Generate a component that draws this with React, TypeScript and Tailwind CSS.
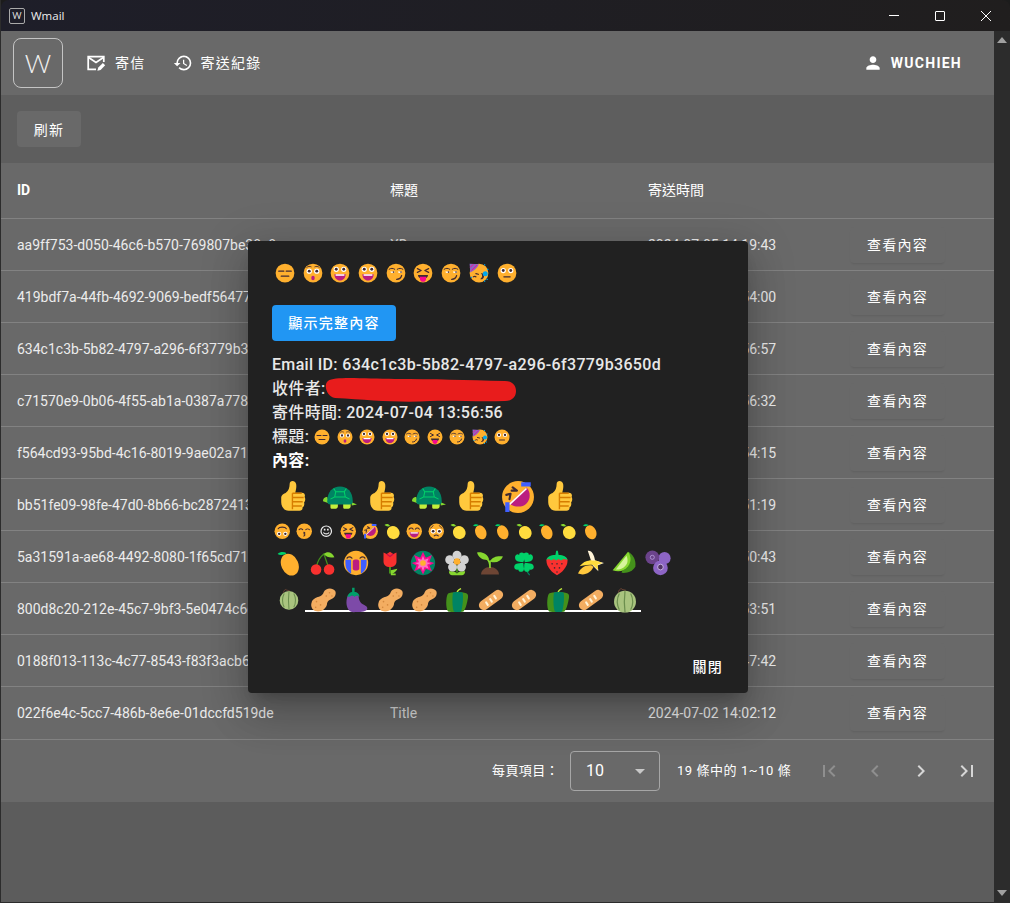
import React from 'react';
import { MdArrowDropDown, MdChevronLeft, MdChevronRight, MdFirstPage, MdHistory, MdLastPage, MdPerson } from 'react-icons/md';

const ink = '#402A32';

const Eye = ({ x, y = 13, r = 4.2 }: { x: number; y?: number; r?: number }) => (
  <>
    <circle cx={x} cy={y} r={r} fill="#fff" />
    <circle cx={x} cy={y} r={r * 0.55} fill={ink} />
  </>
);

const Line = ({ d, w = 2 }: { d: string; w?: number }) => (
  <path d={d} fill="none" stroke={ink} strokeWidth={w} strokeLinecap="round" strokeLinejoin="round" />
);

const Head = () => <circle cx="16" cy="16" r="15" fill="#FFB02E" />;

const Mouth = () => (
  <>
    <path d="M7 18h18c0 6-4 10-9 10s-9-4-9-10z" fill="#BB1D80" />
    <path d="M9 18h14v2.5H9z" fill="#fff" />
  </>
);

const Smirk = () => (
  <>
    <Head />
    <Line d="M5 10c3-2 6-2 9 0M18 10c3-2 6-2 9 0" w={1.600} />
    <path d="M7 13.500h7a3.500 2.500 0 0 1-7 0zM19 13.500h7a3.500 2.500 0 0 1-7 0z" fill="#fff" />
    <circle cx="12" cy="14.500" r="1.300" fill={ink} />
    <circle cx="24" cy="14.500" r="1.300" fill={ink} />
    <Line d="M17 26c4 0 7-2 8-6" />
  </>
);

const Thumb = () => (
  <g transform="translate(-0.5 0) scale(0.88 1)">
    <path d="M4 17c0-3 3-4 5-5 3-2 4-5 4-8 0-4 6-4 7 0 .6 3-.5 6-1 8h7c3 0 4 2 3 4 1 1 1 4-.5 5 .5 2 0 4-1.500 4.500 0 2-1 3.500-3.500 3.500H12c-5 0-8-4-8-8z" fill="#FFC83D" />
    <path d="M16 12.500h10M16 16.500h12M16 20.500h11M16 24.500h10M16 12.500v15" fill="none" stroke="#D67D00" strokeWidth="1.500" />
  </g>
);

const Turtle = () => (
  <>
    <path d="M0 20c0-3 2-4 4-4l2 6zM27 21l5 2-5 1z" fill="#86D72F" />
    <path d="M7 22h7v3c0 1-1 2-2 2H8c-1 0-1-1-1-2zM19 22h7v3c0 1-1 2-2 2h-4c-1 0-1-1-1-2z" fill="#C3EF3C" />
    <path d="M4 20C4 11 9 6 16 6s12 5 12 14c0 2-1 3-3 3H7c-2 0-3-1-3-3z" fill="#008463" />
    <path d="M7 18l4-2 1-5 8 0 1 5 4 2M11 16h10M12 11l-2-3M20 11l2-3" fill="none" stroke="#00D26A" strokeWidth="1" />
  </>
);

const Mango = () => (
  <>
    <ellipse cx="17" cy="18" rx="10.500" ry="14" fill="#FFB02E" transform="rotate(-24 17 18)" />
    <path d="M2 5c3-3 8-3 11-1-2 2-8 3-11 1z" fill="#00D26A" />
  </>
);

const Lemon = () => (
  <>
    <ellipse cx="18" cy="18.500" rx="12" ry="13" fill="#FFDC3E" transform="rotate(-30 18 18.500)" />
    <path d="M1 4c3-3 8-3 11 2-4 1-8 1-11-2z" fill="#86D72F" />
  </>
);

const Rofl = () => (
  <>
    <Head />
    <path d="M8 22L24 7c4 4 4 11 0 15-4 4-11 4-16 0z" fill="#BB1D80" />
    <path d="M8 23L24 8" stroke="#fff" strokeWidth="1.500" />
    <Line d="M11 7l4 3-5 0M5 14l4-1-1 5" />
    <path d="M19 2h9v4h-9zM4 21h4v9H4z" fill="#3F5FFF" />
  </>
);

const Melon = () => (
  <>
    <path d="M8 7C8 4 10 2 12 2M12 3l5 1" fill="none" stroke="#6D4534" strokeWidth="1.200" />
    <circle cx="16" cy="18" r="13.500" fill="#A9C47F" />
    <path d="M9 8c-3 6-3 14 0 20M16 5c-1 8-1 18 0 26M23 8c3 6 3 14 0 20" fill="none" stroke="#6B8E4E" strokeWidth="1.500" />
  </>
);

const Peanut = () => (
  <>
    <path d="M31 5c2 4-1 9-5 10-3 1-4 2-5 5 0 5-5 10-11 10C4 30 0 25 2 19c1-4 5-6 9-7 3-1 5-3 6-6 2-5 11-6 14-1z" fill="#F3AD61" />
    <g fill="#D3883E">
      <circle cx="24" cy="7" r="1" />
      <circle cx="27" cy="11" r="1" />
      <circle cx="20" cy="11" r="1" />
      <circle cx="8" cy="18" r="1" />
      <circle cx="13" cy="22" r="1" />
      <circle cx="7" cy="25" r="1" />
    </g>
  </>
);

const Eggplant = () => (
  <>
    <path d="M5 10h13c0 6 2 10 7 12 4 2 5 5 2 7-3 2-10 2-15 2C6 31 3 25 3 19c0-4 1-7 2-9z" fill="#7D4AA8" />
    <path d="M4 12c1-4 4-6 6-6V1h3v5c3 0 6 2 6 6l-3-2-3 2-3-2-3 2z" fill="#00A06A" />
  </>
);

const Pepper = () => (
  <>
    <path d="M16 8c0-3 2-5 5-6" fill="none" stroke="#C3EF3C" strokeWidth="1.800" />
    <path d="M5 8c3-2 20-2 23 0 2 1 2 4 1 8-1 6-3 12-5 14-2 1-16 1-19 0-3-3-3-18 0-22z" fill="#44911B" />
    <path d="M11 7c3-1 9-1 12 0 1 6 0 17-2 23-2 1-7 1-9 0-2-6-2-17-1-23z" fill="#008463" />
  </>
);

const Baguette = () => (
  <>
    <rect x="-1" y="10" width="34" height="12" rx="6" fill="#F3AD61" transform="rotate(-36 16 16)" />
    <path d="M10 19l2 3M15 15l2 3M20 11l2 3" stroke="#FFF3D7" strokeWidth="2.500" strokeLinecap="round" />
  </>
);

const emojis: Record<string, React.ReactNode> = {
  flat: (
    <>
      <Head />
      <Line d="M6 13h8M18 13h8" />
      <Line d="M10 21h12" />
    </>
  ),
  hush: (
    <>
      <Head />
      <Eye x={10} />
      <Eye x={22} />
      <Line d="M6 7c2-2 5-2 7-1M19 6c2-1 5-1 7 1" w={1.400} />
      <ellipse cx="16" cy="24" rx="2.800" ry="3.500" fill="#BB1D80" />
    </>
  ),
  grin: (
    <>
      <Head />
      <Eye x={10} y={10} />
      <Eye x={22} y={10} />
      <Mouth />
    </>
  ),
  smirk: <Smirk />,
  tongue: (
    <>
      <Head />
      <Line d="M7 9l6 3-6 3M25 9l-6 3 6 3" />
      <path d="M8 19h16c0 2-1 4-3 5H11c-2-1-3-3-3-5z" fill={ink} />
      <path d="M11 22h10v3c0 3-2 5-5 5s-5-2-5-5z" fill="#F70A8D" />
    </>
  ),
  party: (
    <>
      <Head />
      <path d="M1 1l15 1c-3 6-8 11-14 13z" fill="#8D65C5" />
      <path d="M4 12l9-9M2 7l5-5" stroke="#F70A8D" strokeWidth="1.500" />
      <Line d="M11 17l4 1M7 22c2-1 3-1 4 0" />
      <path d="M19 16c3 0 5 2 5 5s-2 5-5 5 2-2 2-5-2-5-2-5z" fill={ink} />
      <circle cx="26" cy="17" r="4" fill="#00A6ED" />
      <path d="M24 2h2v2h-2zM29 9h2v2h-2zM28 25h2v2h-2zM3 22h2v2H3zM24 28h2v2h-2z" fill="#00A6ED" />
    </>
  ),
  stare: (
    <>
      <Head />
      <Eye x={10} y={12} />
      <Eye x={22} y={12} />
      <Line d="M11 22h10" />
    </>
  ),
  upside: (
    <>
      <Head />
      <Line d="M8 11c2-4 14-4 16 0" />
      <Eye x={10} y={21} />
      <Eye x={22} y={21} />
    </>
  ),
  kiss: (
    <>
      <Head />
      <Line d="M6 13c2-2 5-2 7 0M19 13c2-2 5-2 7 0" />
      <Line d="M15 18c3 0 3 3 0 3 3 0 3 4 0 4" />
    </>
  ),
  rofl: <Rofl />,
  lemon: <Lemon />,
  beam: (
    <>
      <Head />
      <Line d="M6 12c2-3 6-3 8 0M18 12c2-3 6-3 8 0" />
      <Mouth />
    </>
  ),
  plead: (
    <>
      <Head />
      <Line d="M5 10c2-1 4-3 5-5M27 10c-2-1-4-3-5-5" w={1.500} />
      <Eye x={10} y={16} r={4.800} />
      <Eye x={22} y={16} r={4.800} />
      <Line d="M12 25c2-2 6-2 8 0" />
    </>
  ),
  mango: <Mango />,
  cherry: (
    <>
      <path d="M8 21c1-7 4-12 9-16 2 4 3 10 6 16" fill="none" stroke="#44911B" strokeWidth="1.500" />
      <path d="M17 5c4-4 10-3 13 4-5 1-10 0-13-4z" fill="#86D72F" />
      <circle cx="7.500" cy="24" r="6.500" fill="#F8312F" />
      <circle cx="23.500" cy="24" r="6.500" fill="#F8312F" />
    </>
  ),
  cry: (
    <>
      <Head />
      <path d="M3 12h7v17c-4-2-7-6-7-13zM22 12h7v4c0 7-3 11-7 13z" fill="#3F5FFF" />
      <Line d="M5 10c1-2 4-2 6 0M21 10c2-2 5-2 6 0" w={1.600} />
      <path d="M12 14c0-3 8-3 8 0v9c0 3-8 3-8 0z" fill="#BB1D80" />
    </>
  ),
  rose: (
    <>
      <path d="M16 18v11" stroke="#44911B" strokeWidth="2.500" />
      <path d="M17 29c4 0 7-3 8-6l-8 2zM17 31h6v-2h-6z" fill="#86D72F" />
      <path d="M8 3l4 2 4-3 4 3 4-2v11c0 4-3 7-8 7s-8-3-8-7z" fill="#F8312F" />
      <path d="M12 5l4 3 4-3" fill="none" stroke="#CA0B4A" strokeWidth="1.500" />
    </>
  ),
  lotus: (
    <>
      <circle cx="16" cy="16" r="15" fill="#008463" />
      <path d="M16 2l3.500 7.500L27 6l-3 8 6 2-6 3 3 7-7.500-3L16 30l-3.500-7L5 26l3-7-6-3 6-2-3-8 7.500 3.500z" fill="#F70A8D" />
      <path d="M16 7l2 5 5-2-2 5 5 1-5 2 2 5-5-2-2 5-2-5-5 2 2-5-5-2 5-1-2-5 5 2z" fill="#FF6DC6" />
      <circle cx="16" cy="16" r="3.500" fill="#FFB02E" />
    </>
  ),
  blossom: (
    <>
      <path d="M16 19v9" stroke="#44911B" strokeWidth="2" />
      <path d="M6 26c4 0 8 0 10 3 2-3 6-3 10-3 0 3-2 5-4 5H10c-2 0-4-2-4-5z" fill="#86D72F" />
      <g fill="#D3D3D3">
        <circle cx="16" cy="6.500" r="5.500" />
        <circle cx="25" cy="12" r="5.500" />
        <circle cx="7" cy="12" r="5.500" />
        <circle cx="10.500" cy="21" r="5.500" />
        <circle cx="21.500" cy="21" r="5.500" />
      </g>
      <circle cx="16" cy="14" r="4" fill="#FFB02E" />
    </>
  ),
  seedling: (
    <>
      <path d="M5 30c0-5 5-9 11-9s11 4 11 9z" fill="#6D4534" />
      <path d="M16 22c0-6-1-9-4-11M16 22V13" fill="none" stroke="#86D72F" strokeWidth="2" />
      <path d="M0 3c6-1 13 1 15 9C8 13 2 10 0 3zM32 8c-6-1-13 0-16 6 7 3 13 0 16-6z" fill="#86D72F" />
    </>
  ),
  clover: (
    <>
      <path d="M16 17c2 5 3 10 7 14" fill="none" stroke="#008463" strokeWidth="1.500" />
      <path d="M15 15C8 15 5 13 5 9c0-3 3-5 5-3 0-4 7-4 7 1 0 3-1 6-2 8z" fill="#00D26A" />
      <path d="M17 15c7 0 10-2 10-6 0-3-3-5-5-3 0-4-7-4-7 1" fill="#00D26A" />
      <path d="M15 16c-7 0-11 1-11 5 0 3 3 4 5 3 0 4 7 4 7-1z" fill="#00D26A" />
      <path d="M17 16c7 0 11 1 11 5 0 3-3 4-5 3 0 4-7 4-7-1z" fill="#00D26A" />
    </>
  ),
  berry: (
    <>
      <path d="M3 13c0-4 5-6 13-6s13 2 13 6c0 8-7 15-13 18C10 28 3 21 3 13z" fill="#F8312F" />
      <path d="M3 12c1-4 5-6 11-6l1-5h2l1 5c6 0 10 2 11 6l-5-1-3 2-3-2-3 2-3-2-3 2-3-2z" fill="#00D26A" />
      <g fill={ink}>
        <circle cx="10" cy="17" r="1" />
        <circle cx="16" cy="17" r="1" />
        <circle cx="22" cy="17" r="1" />
        <circle cx="13" cy="22" r="1" />
        <circle cx="19" cy="22" r="1" />
        <circle cx="16" cy="27" r="1" />
      </g>
    </>
  ),
  banana: (
    <>
      <path d="M12 1c5-1 8 5 9 12l11 3-8 3 1 7-7-7z" fill="#FFF3D7" />
      <path d="M14 13l8 0 8 3-6 2 1 7-7-7z" fill="#FFDC3E" />
      <path d="M0 29c3-7 9-11 17-10l2 2c-3 7-11 11-19 8z" fill="#FFC83D" />
      <path d="M2 20c4-5 9-8 15-7l2 5c-5 0-11 0-17 2z" fill="#FFDC3E" />
    </>
  ),
  lime: (
    <>
      <path d="M21 2c6 3 10 10 9 18-2 6-11 9-17 8z" fill="#44911B" />
      <path d="M21 2c4 6 4 12 0 18-4 5-10 8-19 5z" fill="#86D72F" />
      <path d="M19 7c2 4 2 9-1 12-3 4-7 5-12 5z" fill="#D7F59C" />
    </>
  ),
  blueberry: (
    <>
      <circle cx="24" cy="10" r="7.500" fill="#8D65C5" />
      <circle cx="9" cy="9" r="8.500" fill="#6B438B" />
      <circle cx="9" cy="9" r="2.500" fill="none" stroke="#B9A0DC" strokeWidth="1" />
      <circle cx="19" cy="22" r="9" fill="#8D65C5" />
      <circle cx="19" cy="21" r="3.500" fill="#533566" stroke="#C6B3E4" strokeWidth="1.200" />
    </>
  ),
  melon: <Melon />,
  peanut: <Peanut />,
  eggplant: <Eggplant />,
  pepper: <Pepper />,
  baguette: <Baguette />,
  thumb: <Thumb />,
  turtle: <Turtle />,
  smile: (
    <g transform="translate(3.500 3.500) scale(0.78)">
      <circle cx="16" cy="16" r="13" fill="none" stroke="#eee" strokeWidth="3" />
      <path d="M10 10h4v4h-4zM18 10h4v4h-4z" fill="#eee" />
      <path d="M9 19c3 5 11 5 14 0" fill="none" stroke="#eee" strokeWidth="3" />
    </g>
  ),
};

const Emoji = ({ name, className }: { name: string; className: string }) => (
  <svg viewBox="0 0 32 32" className={`shrink-0 ${className}`} aria-hidden="true">
    {emojis[name]}
  </svg>
);

const subject = ['flat', 'hush', 'grin', 'grin', 'smirk', 'tongue', 'smirk', 'party', 'stare'];
const bodyTop = ['thumb', 'turtle', 'thumb', 'turtle', 'thumb', 'rofl', 'thumb'];
const bodySmall = ['upside', 'kiss', 'smile', 'tongue', 'rofl', 'lemon', 'beam', 'plead', 'lemon', 'mango', 'mango', 'lemon', 'mango', 'lemon', 'mango'];
const bodyPlants = ['mango', 'cherry', 'cry', 'rose', 'lotus', 'blossom', 'seedling', 'clover', 'berry', 'banana', 'lime', 'blueberry'];
const bodyFood = ['peanut', 'eggplant', 'peanut', 'peanut', 'pepper', 'baguette', 'baguette', 'pepper', 'baguette', 'melon'];

const rows = [
  { id: 'aa9ff753-d050-46c6-b570-769807be38c8', title: 'XD', time: '2024-07-05 14:19:43' },
  { id: '419bdf7a-44fb-4692-9069-bedf56477e10', title: 'Title', time: '2024-07-04 13:54:00' },
  { id: '634c1c3b-5b82-4797-a296-6f3779b3650d', title: 'Title', time: '2024-07-04 13:56:57' },
  { id: 'c71570e9-0b06-4f55-ab1a-0387a7782d10', title: 'Title', time: '2024-07-04 13:56:32' },
  { id: 'f564cd93-95bd-4c16-8019-9ae02a71b6c4', title: 'Title', time: '2024-07-04 13:54:15' },
  { id: 'bb51fe09-98fe-47d0-8b66-bc2872413a77', title: 'Title', time: '2024-07-04 13:51:19' },
  { id: '5a31591a-ae68-4492-8080-1f65cd71e2a0', title: 'Title', time: '2024-07-04 13:50:43' },
  { id: '800d8c20-212e-45c7-9bf3-5e0474c6d1f3', title: 'Title', time: '2024-07-04 13:53:51' },
  { id: '0188f013-113c-4c77-8543-f83f3acb6e92', title: 'Title', time: '2024-07-04 13:47:42' },
  { id: '022f6e4c-5cc7-486b-8e6e-01dccfd519de', title: 'Title', time: '2024-07-02 14:02:12' },
];

const MailEditIcon = () => (
  <svg viewBox="0 0 24 24" className="w-[22px] h-[22px]" fill="none" stroke="#fff" strokeWidth="1.900">
    <path d="M12 19H3.500V5h17v6" />
    <path d="M4 6l8 5.500L20 6" />
    <path d="M13.500 20.500l1-3.500 5-5 2.500 2.500-5 5z" fill="#fff" stroke="none" />
  </svg>
);

const App: React.FC = () => {
  return (
    <div className="relative w-[1010px] h-[903px] overflow-hidden flex flex-col bg-[#1c1c1c] border-l border-b border-[#2c2c2c] text-white font-['Roboto','Noto_Sans_CJK_TC',sans-serif]">
      {/* title bar */}
      <div className="h-[31px] shrink-0 flex items-center justify-between rounded-t-lg bg-gradient-to-r from-[#1e1e29] to-[#201e1e]">
        <div className="flex items-center pl-2">
          <div className="w-4 h-4 flex items-center justify-center rounded-[2px] border border-[#aaa] text-[9px] font-['Lato'] text-[#ddd]">W</div>
          <span className="ml-[6px] text-[11.5px] text-[#eee] font-['Open_Sans']">Wmail</span>
        </div>
        <div className="flex items-center pr-[19px] gap-[36px]">
          <div className="w-[10px] h-px bg-white" />
          <div className="w-[10px] h-[10px] border border-white rounded-[1px]" />
          <svg viewBox="0 0 10 10" className="w-[10px] h-[10px]" stroke="#fff" strokeWidth="1">
            <path d="M0 0l10 10M10 0L0 10" />
          </svg>
        </div>
      </div>

      <div className="flex-1 flex min-h-0">
        <div className="flex-1 min-w-0 flex flex-col bg-[#5c5c5c]">
          {/* app bar */}
          <header className="h-16 shrink-0 flex items-center bg-[#696969] pl-3 pr-8">
            <div className="w-[50px] h-[50px] flex items-center justify-center rounded-lg border border-[#c4c4c4] text-[26px] font-light font-['Lato'] text-[#f0f0f0]">W</div>
            <nav className="flex items-center ml-[22px] text-sm tracking-[1.25px] text-white">
              <MailEditIcon />
              <span className="ml-2">寄信</span>
              <MdHistory size={20} className="ml-[27px]" />
              <span className="ml-2">寄送紀錄</span>
            </nav>
            <div className="ml-auto flex items-center text-sm font-bold tracking-[1.25px]">
              <MdPerson size={20} />
              <span className="ml-2">WUCHIEH</span>
            </div>
          </header>

          {/* toolbar */}
          <div className="h-[68px] shrink-0 flex items-center px-4 bg-[#5e5e5e]">
            <button className="w-16 h-9 pt-px rounded bg-[#696969] text-sm tracking-[1.25px] text-white">刷新</button>
          </div>

          {/* table */}
          <div className="bg-[#696969] text-sm text-[#ececec]">
            <div className="grid grid-cols-[373px_258px_202px_1fr] h-[56px] pb-px items-center border-b border-[#828282] text-white">
              <div className="px-4 font-bold">ID</div>
              <div className="px-4">標題</div>
              <div className="px-4">寄送時間</div>
              <div />
            </div>
            {rows.map((row, i) => (
              <div
                key={row.id}
                className={
                  i === rows.length - 1
                    ? 'grid grid-cols-[373px_258px_202px_1fr] h-[53px] items-center border-b border-[#828282]'
                    : 'grid grid-cols-[373px_258px_202px_1fr] h-[52px] items-center border-b border-[#828282]'
                }
              >
                <div className="px-4 truncate">{row.id}</div>
                <div className="px-4 text-[#d8d8d8]">{row.title}</div>
                <div className="px-4">{row.time}</div>
                <div className="px-4">
                  <button className="w-[95px] h-9 rounded bg-[#696969] tracking-[1.25px] text-white shadow-[0_2px_2px_-1px_rgba(0,0,0,0.09)]">查看內容</button>
                </div>
              </div>
            ))}
            <div className="h-[62px] flex items-center text-[13px] text-white">
              <span className="ml-[491px] tracking-[0.4px]">每頁項目：</span>
              <div className="ml-[11px] w-[90px] h-10 flex items-center justify-between rounded border border-[#a6a6a6] pl-[15px] pr-[7px] text-base">
                <span>10</span>
                <MdArrowDropDown size={24} className="text-[#c8c8c8]" />
              </div>
              <span className="ml-[17px] tracking-[0.55px]">19 條中的 1~10 條</span>
              <div className="ml-[26px] flex items-center gap-[22px]">
                <MdFirstPage size={24} className="text-[#8f8f8f]" />
                <MdChevronLeft size={24} className="text-[#8f8f8f]" />
                <MdChevronRight size={24} className="text-[#d6d6d6]" />
                <MdLastPage size={24} className="text-[#d6d6d6]" />
              </div>
            </div>
          </div>
        </div>

        {/* scrollbar */}
        <div className="w-4 shrink-0 flex flex-col items-center justify-between bg-[#2c2c2c] pt-[6px] pb-[6px]">
          <div className="w-0 h-0 border-x-[5px] border-x-transparent border-b-[6px] border-b-[#a0a0a0]" />
          <div className="w-0 h-0 border-x-[5px] border-x-transparent border-t-[6px] border-t-[#a0a0a0]" />
        </div>
      </div>

      {/* dialog */}
      <div className="absolute left-[247px] top-[241px] w-[500px] h-[452px] rounded bg-[#212121] px-6 shadow-[0_11px_15px_-7px_rgba(0,0,0,0.2),0_24px_38px_3px_rgba(0,0,0,0.14),0_9px_46px_8px_rgba(0,0,0,0.12)]">
        <div className="flex gap-[7.7px] pl-[3px] pt-[22px]">
          {subject.map((name, i) => (
            <Emoji key={i} name={name} className="w-5 h-5" />
          ))}
        </div>
        <button className="mt-[22px] block w-[124px] h-9 rounded bg-[#2196f3] text-sm font-medium tracking-[1.25px] text-white">顯示完整內容</button>
        <div className="relative mt-3 text-base leading-6 font-medium tracking-[0.33px] text-[#e8e8e8]">
          <div>Email ID: 634c1c3b-5b82-4797-a296-6f3779b3650d</div>
          <div>收件者:</div>
          <div>寄件時間: 2024-07-04 13:56:56</div>
          <div className="flex items-center">
            標題:
            <div className="ml-[5px] flex gap-[6.500px]">
              {subject.map((name, i) => (
                <Emoji key={i} name={name} className="w-4 h-4" />
              ))}
            </div>
          </div>
          <div className="font-bold text-white">內容:</div>
          <svg viewBox="0 0 191 26" className="absolute left-[53px] top-[24px] w-[191px] h-[26px]">
            <path d="M3 4C10-1 40 2 70 2c40 0 70 1 110 2 8 0 11 5 11 10s-3 10-11 10c-30 1-50-1-75 0-30 2-60-1-95-3C2 20-2 8 3 4z" fill="#e81c1c" />
          </svg>
        </div>
        <div className="mt-[7px] pl-[6px] flex gap-[10.500px]">
          {bodyTop.map((name, i) => (
            <Emoji key={i} name={name} className="w-[34px] h-[34px]" />
          ))}
        </div>
        <div className="mt-[9px] pl-[2px] flex gap-[5.500px]">
          {bodySmall.map((name, i) => (
            <Emoji key={i} name={name} className="w-[16.500px] h-[16.500px]" />
          ))}
        </div>
        <div className="mt-[10px] pl-[4px] flex gap-[7.500px]">
          {bodyPlants.map((name, i) => (
            <Emoji key={i} name={name} className="w-[26px] h-[26px]" />
          ))}
        </div>
        <div className="mt-[10px] pl-[6px] flex items-end">
          <Emoji name="melon" className="w-[22px] h-[26px]" />
          <div className="ml-[5px] flex gap-[7.500px] border-b-2 border-white pr-[3px] pl-[5px] h-[25px]">
            {bodyFood.map((name, i) => (
              <Emoji key={i} name={name} className="w-[26px] h-[26px]" />
            ))}
          </div>
        </div>
        <div className="absolute right-[25px] bottom-4 text-sm font-medium tracking-[1.25px] text-white">關閉</div>
      </div>
    </div>
  );
};

export default App;
